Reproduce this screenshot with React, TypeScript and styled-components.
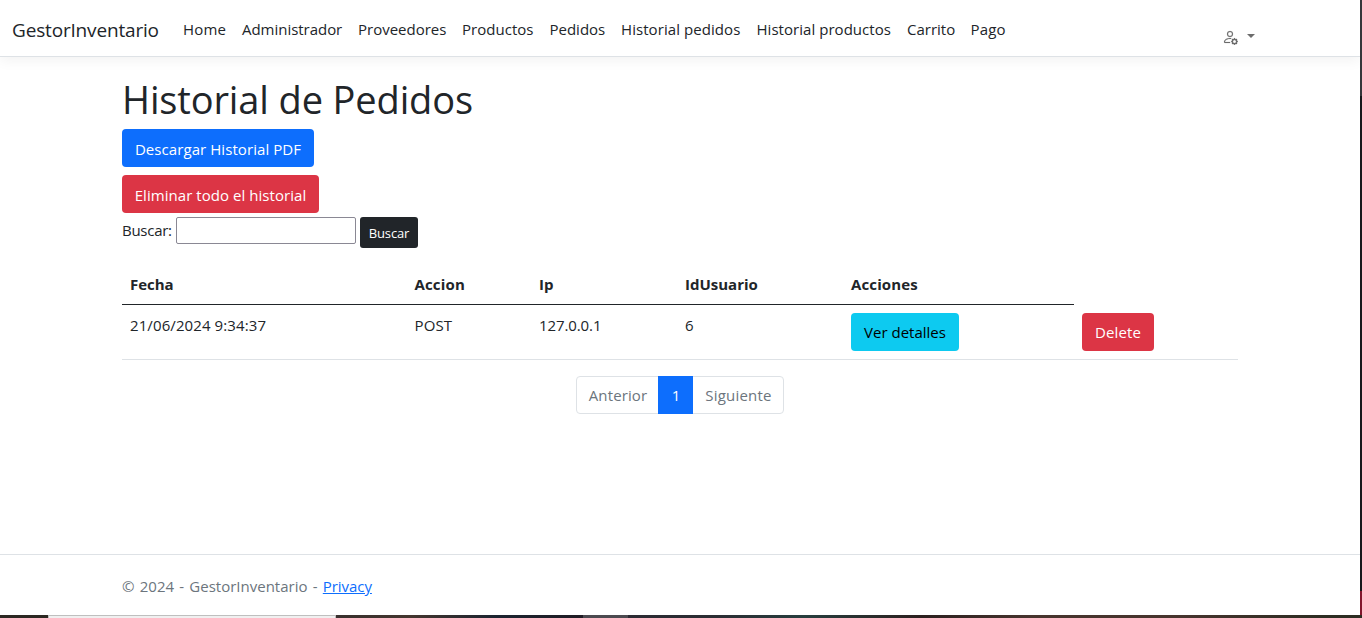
import React from 'react';
import styled, { createGlobalStyle } from 'styled-components';
import { BsPersonGear } from 'react-icons/bs';

const GlobalStyle = createGlobalStyle`
  * { box-sizing: border-box; }
  html, body { margin: 0; padding: 0; background: #fff; }
  body {
    font-family: 'Open Sans', 'Noto Sans', sans-serif;
    font-size: 15px;
    line-height: 24px;
    color: #212529;
    overflow: hidden;
  }
`;

const Desktop = styled.div`
  width: 1362px;
  height: 618px;
  display: grid;
  grid-template-columns: 1360px 2px;
  grid-template-rows: 615px 3px;
`;

const Page = styled.div`
  display: flex;
  flex-direction: column;
  background: #fff;
  overflow: hidden;
`;

const WindowEdge = styled.div`
  background: linear-gradient(#35363a 0 96px, #16181b 96px 591px, #82162c 591px);
`;

const Taskbar = styled.div`
  grid-column: 1 / 3;
  display: grid;
  grid-template-columns: 48px 288px 247px 45px 1fr;
`;

const TaskSlot = styled.div<{ $fill: string }>`
  background: ${(p) => p.$fill};
`;

const ActiveTask = styled.div`
  background: #f0f0f0;
  border: 1px solid #bfbfbf;
  border-bottom: 0;
`;

const Text = styled.span<{ $track?: number }>`
  display: inline-block;
  white-space: nowrap;
  letter-spacing: ${(p) => p.$track ?? 0}px;
`;

const Navbar = styled.nav`
  height: 57px;
  flex: none;
  display: flex;
  padding: 0 12px;
  border-bottom: 1px solid #dee2e6;
  box-shadow: 0 4px 12px rgba(0, 0, 0, 0.05);
`;

const Brand = styled.a`
  width: 163px;
  padding-top: 15px;
  font-size: 19px;
  line-height: 30px;
`;

const NavLink = styled.a<{ $w: number }>`
  width: ${(p) => p.$w}px;
  padding: 17px 0 0 8px;
`;

const UserMenu = styled.div`
  margin-left: auto;
  width: 125.5px;
  display: flex;
  padding-top: 29px;
  color: #6c6c6c;
`;

const GearIcon = styled(BsPersonGear)`
  flex: none;
  margin: 0 0.5px 0 -0.5px;
  stroke: currentColor;
  stroke-width: 0.15;
`;

const Caret = styled.span`
  margin: 5px 0 0 8px;
  width: 0;
  height: 0;
  border: 4.5px solid transparent;
  border-top-color: #6c6c6c;
  border-bottom: 0;
`;

const Main = styled.main`
  width: 1116px;
  height: 497px;
  margin: 0 auto;
  padding-top: 18px;
`;

const Title = styled.h1`
  margin: 0 0 6px;
  font-size: 38px;
  font-weight: 400;
  line-height: 48px;
`;

const Button = styled.button<{ $bg: string; $fg?: string; $w: number }>`
  display: block;
  width: ${(p) => p.$w}px;
  height: 38px;
  padding: 1px 0 0;
  border: 0;
  border-radius: 4px;
  background: ${(p) => p.$bg};
  color: ${(p) => p.$fg ?? '#fff'};
  font: inherit;
  text-align: center;
`;

const RowButton = styled(Button)`
  padding: 0 0 1px;
`;

const Stack = styled.div`
  display: grid;
  gap: 8px;
`;

const SearchForm = styled.div`
  display: flex;
  align-items: flex-start;
  margin-top: 4px;
`;

const SearchLabel = styled.label`
  width: 54px;
  padding-top: 1px;
`;

const SearchInput = styled.input`
  width: 180px;
  height: 27px;
  margin: 0 4px 0 0;
  border: 1px solid #8a8894;
  border-radius: 2px;
  background: #fff;
`;

const SearchButton = styled(Button)`
  height: 31px;
  border-radius: 3px;
  font-size: 13px;
`;

const Table = styled.div`
  margin-top: 16px;
`;

const columns = '284.5px 124.5px 146px 166px 231px 164px';

const HeadRow = styled.div`
  display: grid;
  grid-template-columns: ${columns};
  font-weight: 700;
`;

const HeadCell = styled.div`
  height: 41px;
  padding: 8px 8px 0;
  border-bottom: 1px solid #212529;
`;

const BodyRow = styled.div`
  display: grid;
  grid-template-columns: ${columns};
  height: 55px;
  border-bottom: 1px solid #dee2e6;
`;

const Cell = styled.div`
  padding: 8px 8px 0;
`;

const Pagination = styled.div`
  display: flex;
  width: 208px;
  height: 38px;
  margin: 16px auto 0;
  border: 1px solid #dee2e6;
  border-radius: 4px;
  color: #6c757d;
`;

const PageItem = styled.div<{ $w: number; $active?: boolean }>`
  width: ${(p) => p.$w}px;
  height: ${(p) => (p.$active ? 38 : 36)}px;
  margin-top: ${(p) => (p.$active ? -1 : 0)}px;
  padding: ${(p) => (p.$active ? 7 : 6)}px 0 0 1px;
  text-align: center;
  background: ${(p) => (p.$active ? '#0d6efd' : 'transparent')};
  color: ${(p) => (p.$active ? '#fff' : 'inherit')};
`;

const Footer = styled.footer`
  flex: 1;
  border-top: 1px solid #dee2e6;
  color: #6c757d;
`;

const FooterInner = styled.div`
  width: 1116px;
  margin: 0 auto;
  padding-top: 19px;
  word-spacing: 1.35px;
`;

const PrivacyLink = styled.a`
  color: #0d6efd;
  letter-spacing: -0.05px;
  text-decoration: underline;
`;

const navItems = [
  { label: 'Home', w: 59, track: 0.15 },
  { label: 'Administrador', w: 116, track: -0.03 },
  { label: 'Proveedores', w: 104, track: 0 },
  { label: 'Productos', w: 87.5, track: 0.03 },
  { label: 'Pedidos', w: 71.5, track: 0 },
  { label: 'Historial pedidos', w: 135.5, track: 0.07 },
  { label: 'Historial productos', w: 150.5, track: 0.04 },
  { label: 'Carrito', w: 63.5, track: 0 },
  { label: 'Pago', w: 52, track: 0.2 },
];

const headings = [
  { label: 'Fecha', track: -0.05 },
  { label: 'Accion', track: 0.15 },
  { label: 'Ip', track: 0 },
  { label: 'IdUsuario', track: 0 },
  { label: 'Acciones', track: 0.12 },
];

export default function App() {
  return (
    <>
      <GlobalStyle />
      <Desktop>
        <Page>
          <Navbar>
            <Brand><Text $track={-0.17}>GestorInventario</Text></Brand>
            {navItems.map((n) => (
              <NavLink key={n.label} $w={n.w}><Text $track={n.track}>{n.label}</Text></NavLink>
            ))}
            <UserMenu>
              <GearIcon size={16} />
              <Caret />
            </UserMenu>
          </Navbar>
          <Main>
            <Title><Text $track={-0.13}>Historial de Pedidos</Text></Title>
            <Stack>
              <Button $bg="#0d6efd" $w={192}><Text $track={0.07}>Descargar Historial PDF</Text></Button>
              <Button $bg="#dc3545" $w={197}><Text $track={0.05}>Eliminar todo el historial</Text></Button>
            </Stack>
            <SearchForm>
              <SearchLabel><Text $track={-0.27}>Buscar:</Text></SearchLabel>
              <SearchInput />
              <SearchButton $bg="#212529" $w={58}><Text $track={-0.15}>Buscar</Text></SearchButton>
            </SearchForm>
            <Table>
              <HeadRow>
                {headings.map((h) => (
                  <HeadCell key={h.label}><Text $track={h.track}>{h.label}</Text></HeadCell>
                ))}
              </HeadRow>
              <BodyRow>
                <Cell><Text $track={0.1}>21/06/2024 9:34:37</Text></Cell>
                <Cell><Text $track={0.15}>POST</Text></Cell>
                <Cell><Text $track={-0.1}>127.0.0.1</Text></Cell>
                <Cell>6</Cell>
                <Cell>
                  <RowButton $bg="#0dcaf0" $fg="#000" $w={108}><Text>Ver detalles</Text></RowButton>
                </Cell>
                <Cell>
                  <RowButton $bg="#dc3545" $w={72}><Text $track={0.1}>Delete</Text></RowButton>
                </Cell>
              </BodyRow>
            </Table>
            <Pagination>
              <PageItem $w={81}><Text $track={0.12}>Anterior</Text></PageItem>
              <PageItem $w={35} $active>1</PageItem>
              <PageItem $w={90}><Text $track={0.2}>Siguiente</Text></PageItem>
            </Pagination>
          </Main>
          <Footer>
            <FooterInner>
              <Text>© 2024 - GestorInventario - <PrivacyLink>Privacy</PrivacyLink></Text>
            </FooterInner>
          </Footer>
        </Page>
        <WindowEdge />
        <Taskbar>
          <TaskSlot $fill="#2c2822" />
          <ActiveTask />
          <TaskSlot $fill="linear-gradient(90deg, #38302e, #44362f 30%, #1c2430 65%, #201c24)" />
          <TaskSlot $fill="#4c4a50" />
          <TaskSlot $fill="linear-gradient(90deg, #2c2b33, #2b2d33 12%, #273e3e 24%, #2c201f 40%, #47342e 55%, #47342e 75%, #2d2d22 95%)" />
        </Taskbar>
      </Desktop>
    </>
  );
}
